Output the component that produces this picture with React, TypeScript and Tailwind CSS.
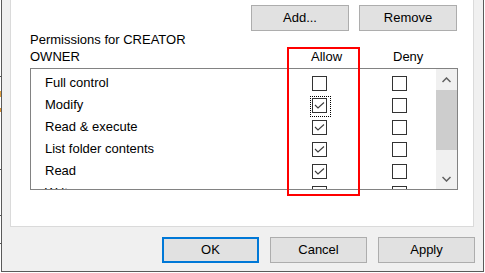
const rows = [
  { name: "Full control", allow: false },
  { name: "Modify", allow: true, focus: true },
  { name: "Read & execute", allow: true },
  { name: "List folder contents", allow: true },
  { name: "Read", allow: true },
  { name: "Write", allow: false },
];

function Check({ checked, focus }: { checked?: boolean; focus?: boolean }) {
  return (
    <span className="relative block w-[15px] h-[15px] border border-[#333333] bg-white">
      {checked && (
        <svg width="13" height="13" viewBox="0 0 13 13" className="absolute left-0 top-0">
          <polyline points="2,6 5,9 11,3.5" fill="none" stroke="#3c3c3c" strokeWidth="1.1" />
        </svg>
      )}
      {focus && <span className="absolute -left-[3px] -top-[3px] w-[21px] h-[21px] border border-dotted border-black" />}
    </span>
  );
}

function Btn({ label, primary }: { label: string; primary?: boolean }) {
  return (
    <button
      className={
        primary
          ? "w-[97px] h-[26px] bg-[#e1e1e1] border-2 border-[#0078d7] text-[13px] text-black"
          : "w-[97px] h-[26px] bg-[#e1e1e1] border border-[#adadad] text-[13px] text-black"
      }
    >
      {label}
    </button>
  );
}

export default function App() {
  return (
    <div
      className="relative w-[485px] h-[273px] bg-white flex overflow-hidden"
      style={{ fontFamily: '"Liberation Sans", Arial, sans-serif' }}
    >
      {/* stray bits of the window behind */}
      <div className="w-[1px] flex flex-col">
        <span className="mt-[76px] h-[1px] bg-[#555]" />
        <span className="mt-[14px] h-[6px] bg-[#e0a040]" />
        <span className="mt-[11px] h-[4px] bg-[#d89030]" />
        <span className="mt-[57px] h-[1px] bg-[#555]" />
        <span className="mt-[45px] h-[1px] bg-[#555]" />
        <span className="mt-[27px] h-[1px] bg-[#555]" />
      </div>

      <div className="w-[483px] h-[272px] bg-[#f0f0f0] border-l border-r border-b border-[#5a5a5a] pl-[8px] pr-[8px] flex flex-col">
        {/* tab page */}
        <div className="w-[464px] h-[227px] bg-white border-l border-r border-b border-[#dadada] pl-[19px] pr-[15px] pt-[5px] flex flex-col text-[13px] text-black">
          <div className="flex justify-end gap-[10px] pr-[1px]">
            <button className="w-[98px] h-[26px] bg-[#e1e1e1] border border-[#adadad]">Add...</button>
            <button className="w-[98px] h-[26px] bg-[#e1e1e1] border border-[#adadad]">Remove</button>
          </div>

          <div className="grid grid-cols-[281px_82px_1fr] items-end leading-[17px]">
            <span className="w-[200px]">Permissions for CREATOR OWNER</span>
            <span>Allow</span>
            <span>Deny</span>
          </div>

          <div className="mt-[3px] h-[122px] border border-[#828282] flex overflow-hidden">
            <div className="flex-1 pt-[3px] pl-[14px]">
              {rows.map((r) => (
                <div key={r.name} className="grid grid-cols-[267px_80px_1fr] items-center h-[22px] leading-[22px]">
                  <span>{r.name}</span>
                  <Check checked={r.allow} focus={r.focus} />
                  <Check />
                </div>
              ))}
            </div>
            <div className="w-[21px] bg-[#f0f0f0] flex flex-col">
              <div className="h-[21px] flex items-center justify-center">
                <svg width="9" height="6" viewBox="0 0 9 6">
                  <polyline points="0.5,5 4.5,1 8.5,5" fill="none" stroke="#606060" strokeWidth="1.5" />
                </svg>
              </div>
              <div className="h-[60px] bg-[#cdcdcd]" />
              <div className="flex-1" />
              <div className="h-[21px] flex items-center justify-center">
                <svg width="9" height="6" viewBox="0 0 9 6">
                  <polyline points="0.5,1 4.5,5 8.5,1" fill="none" stroke="#606060" strokeWidth="1.5" />
                </svg>
              </div>
            </div>
          </div>
        </div>

        <div className="mt-[10px] flex justify-end gap-[11px]">
          <Btn label="OK" primary />
          <Btn label="Cancel" />
          <Btn label="Apply" />
        </div>
      </div>

      {/* red annotation box */}
      <div className="absolute left-[287px] top-[47px] w-[73px] h-[149px] border-2 border-[#ff0000]" />
    </div>
  );
}
